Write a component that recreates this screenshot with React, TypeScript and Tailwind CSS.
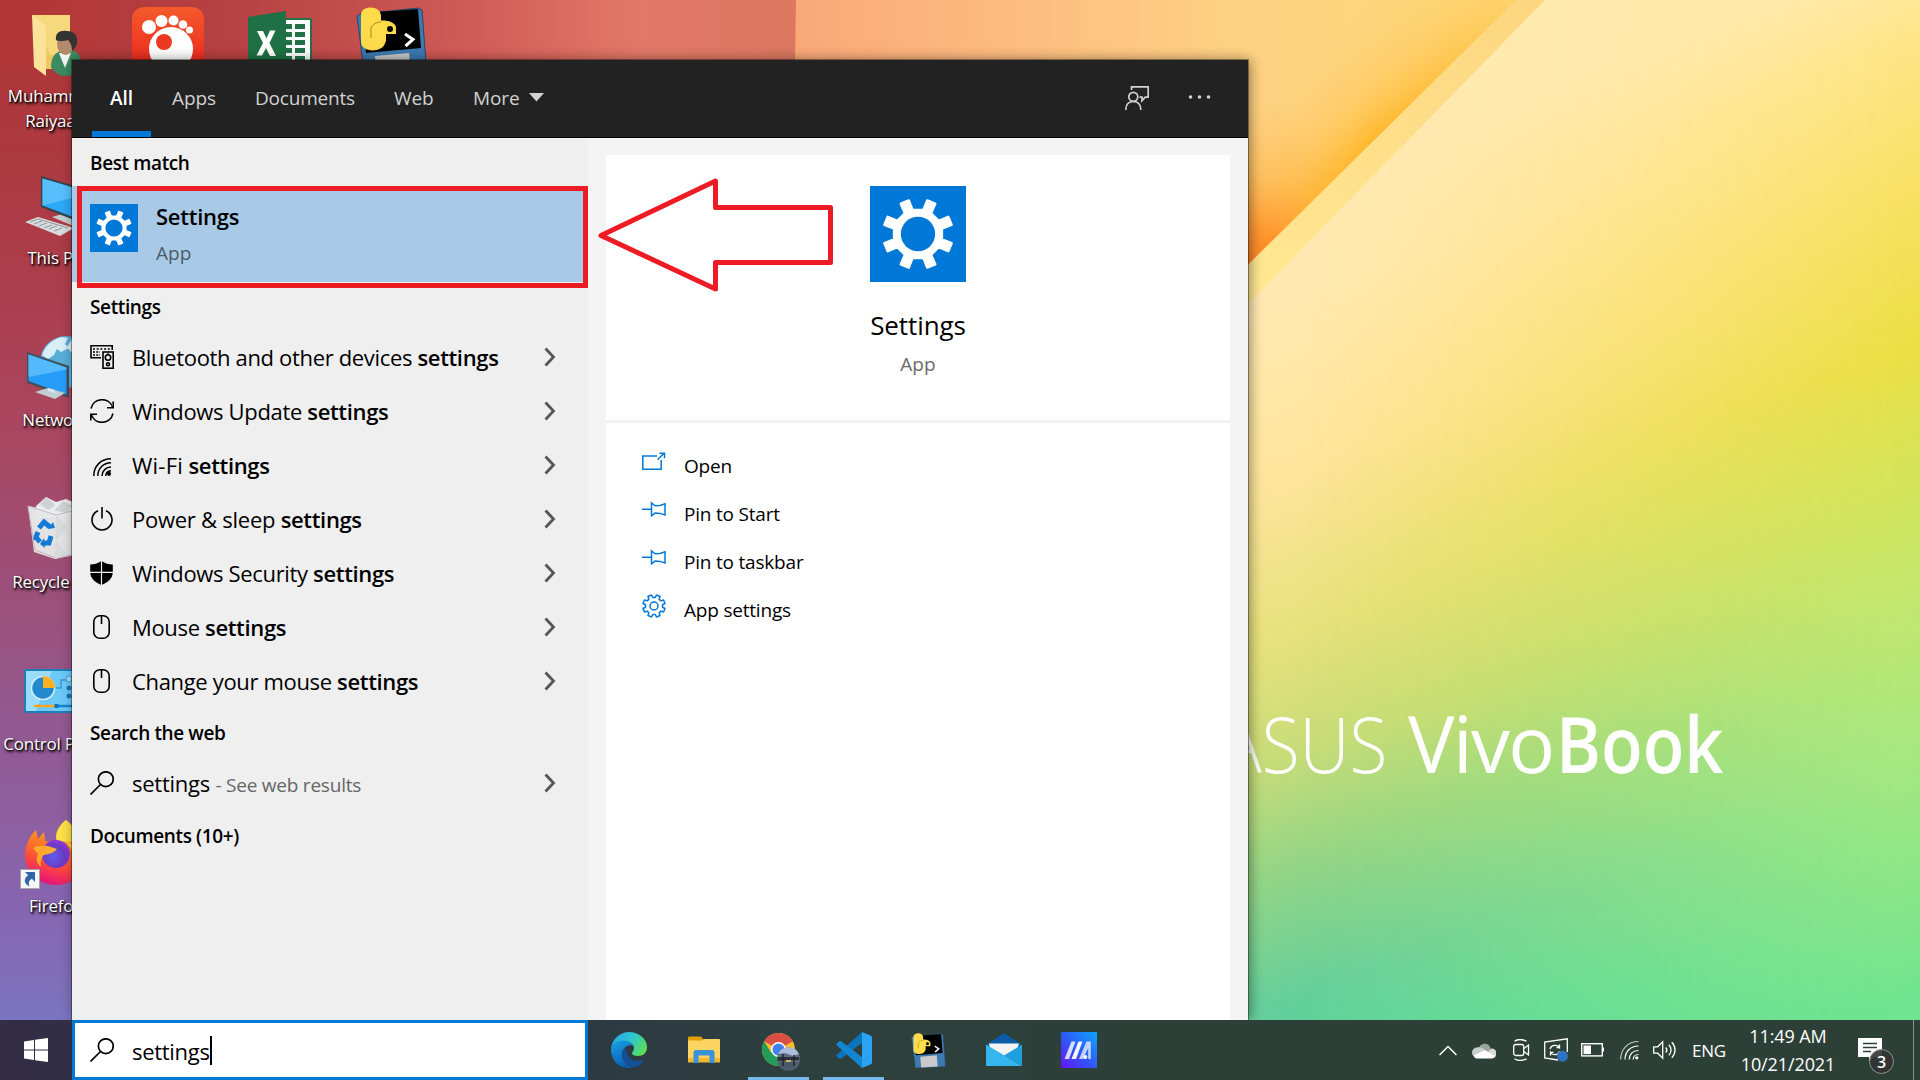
import type { ReactNode } from 'react';

/* ---------- helpers ---------- */

function gearPath(cx: number, cy: number, outer: number, inner: number, topHalf: number, rootHalf: number) {
  const pts: string[] = [];
  for (let i = 0; i < 8; i++) {
    const mid = ((i + 0.5) * Math.PI) / 4;
    const corners: [number, number][] = [
      [inner, mid - rootHalf],
      [outer, mid - topHalf],
      [outer, mid + topHalf],
      [inner, mid + rootHalf],
    ];
    corners.forEach(([r, a]) => pts.push(`${(cx + r * Math.sin(a)).toFixed(2)} ${(cy - r * Math.cos(a)).toFixed(2)}`));
  }
  return `M${pts.join('L')}Z`;
}

/* ---------- wallpaper ---------- */

function Wallpaper() {
  return (
    <svg className="absolute inset-0" width="1920" height="1080" viewBox="0 0 1920 1080">
      <defs>
        <linearGradient id="wSide" x1="0" y1="0" x2="0" y2="1">
          <stop offset="0" stopColor="#b03536" />
          <stop offset=".23" stopColor="#ac3c47" />
          <stop offset=".39" stopColor="#a9465f" />
          <stop offset=".58" stopColor="#99527f" />
          <stop offset=".84" stopColor="#8765b0" />
          <stop offset=".95" stopColor="#7a75bf" />
        </linearGradient>
        <linearGradient id="wTop" x1="0" y1="0" x2="1" y2="0">
          <stop offset="0" stopColor="#b03536" />
          <stop offset=".3" stopColor="#b84143" />
          <stop offset=".58" stopColor="#d05a56" />
          <stop offset=".8" stopColor="#e27867" />
          <stop offset="1" stopColor="#dc7860" />
        </linearGradient>
        <linearGradient id="wOrange" gradientUnits="userSpaceOnUse" x1="796" y1="0" x2="1500" y2="0">
          <stop offset="0" stopColor="#faa878" />
          <stop offset=".35" stopColor="#fdbf80" />
          <stop offset=".62" stopColor="#fed184" />
          <stop offset="1" stopColor="#fed775" />
        </linearGradient>
        <linearGradient id="wFold" gradientUnits="userSpaceOnUse" x1="1382" y1="132" x2="1312" y2="62">
          <stop offset="0" stopColor="#ffb82c" />
          <stop offset=".4" stopColor="#ffc54e" stopOpacity=".5" />
          <stop offset="1" stopColor="#ffcf70" stopOpacity="0" />
        </linearGradient>
        <linearGradient id="wFoldFade" gradientUnits="userSpaceOnUse" x1="1516" y1="0" x2="1380" y2="134">
          <stop offset="0" stopColor="#fff" stopOpacity=".15" />
          <stop offset="1" stopColor="#fff" />
        </linearGradient>
        <mask id="wFoldMask" maskUnits="userSpaceOnUse" x="796" y="0" width="1124" height="400">
          <rect x="796" width="1124" height="400" fill="url(#wFoldFade)" />
        </mask>
        <radialGradient id="wGlow" gradientUnits="userSpaceOnUse" cx="1240" cy="285" r="190">
          <stop offset="0" stopColor="#ff701e" />
          <stop offset=".3" stopColor="#ff8f2c" stopOpacity=".85" />
          <stop offset=".6" stopColor="#ffae48" stopOpacity=".4" />
          <stop offset="1" stopColor="#ffc060" stopOpacity="0" />
        </radialGradient>
        <linearGradient id="wBand" gradientUnits="userSpaceOnUse" x1="1530" y1="0" x2="1250" y2="280">
          <stop offset="0" stopColor="#fdd681" />
          <stop offset="1" stopColor="#ffe792" />
        </linearGradient>
        <linearGradient id="wWarm" gradientUnits="userSpaceOnUse" x1="0" y1="0" x2="544" y2="1504">
          <stop offset=".33" stopColor="#ffe9b2" />
          <stop offset=".45" stopColor="#ffe9b0" />
          <stop offset=".55" stopColor="#fee59c" />
          <stop offset=".648" stopColor="#e7e17c" />
          <stop offset=".72" stopColor="#c6dc79" />
          <stop offset=".785" stopColor="#93d586" />
          <stop offset=".86" stopColor="#66cf9a" />
          <stop offset=".93" stopColor="#4fd8a0" />
        </linearGradient>
        <linearGradient id="wCool" gradientUnits="userSpaceOnUse" x1="0" y1="0" x2="544" y2="1504">
          <stop offset=".38" stopColor="#ffe9a6" />
          <stop offset=".43" stopColor="#fee588" />
          <stop offset=".52" stopColor="#f8e163" />
          <stop offset=".61" stopColor="#ecdf45" />
          <stop offset=".67" stopColor="#d9e354" />
          <stop offset=".76" stopColor="#c2e76e" />
          <stop offset=".85" stopColor="#a6e880" />
          <stop offset=".995" stopColor="#70e48f" />
        </linearGradient>
        <linearGradient id="wBlend" gradientUnits="userSpaceOnUse" x1="1300" y1="0" x2="1900" y2="0">
          <stop offset="0" stopColor="#fff" stopOpacity="0" />
          <stop offset="1" stopColor="#fff" />
        </linearGradient>
        <mask id="wBlendMask" maskUnits="userSpaceOnUse" x="1200" y="0" width="720" height="1080">
          <rect x="1200" width="720" height="1080" fill="url(#wBlend)" />
        </mask>
      </defs>
      <rect width="800" height="1080" fill="url(#wSide)" />
      <rect width="796" height="66" fill="url(#wTop)" />
      <path d="M796 0H1560L1200 360H790Z" fill="url(#wOrange)" />
      <path d="M796 0H1560L1200 360H790Z" fill="url(#wFold)" mask="url(#wFoldMask)" />
      <path d="M796 0H1560L1200 360H790Z" fill="url(#wGlow)" />
      <path d="M1516 0H1920V1080H1200V312Z" fill="url(#wBand)" />
      <path d="M1545 0H1920V1080H1200V353Z" fill="url(#wWarm)" />
      <path d="M1545 0H1920V1080H1200V353Z" fill="url(#wCool)" mask="url(#wBlendMask)" />
    </svg>
  );
}

function LaptopBrand() {
  return (
    <div className="absolute left-[1220px] top-[690px] flex h-[106px] items-center whitespace-nowrap text-[78px] leading-none text-white">
      <div className="w-[188px]">
        <div className="origin-left scale-x-[0.89] font-['Open_Sans',sans-serif] font-light">ASUS</div>
      </div>
      <div className="font-['Open_Sans',sans-serif] font-medium tracking-[-1.600px]">Vivo</div>
      <div className="ml-0.5 origin-left scale-x-[0.875] font-['Open_Sans',sans-serif] font-semibold">Book</div>
    </div>
  );
}

/* ---------- desktop icons ---------- */

function ShortcutBadge() {
  return (
    <g>
      <rect x=".5" y="52.5" width="19" height="19" fill="#f6f6f6" stroke="#a5a5a5" />
      <path d="M5 55h10v10l-3.2-3.2c-3 2-3.600 4-2.300 7.500C3.500 67 3.500 61 8.200 58.200Z" fill="#3167a8" />
    </g>
  );
}

function FolderUserIcon() {
  return (
    <svg width="72" height="72" viewBox="0 0 72 72">
      <path d="M12 8h38v54H25Z" fill="#edc862" />
      <path d="M12 8h38v40H30Z" fill="#f6d97c" />
      <path d="M12 8 26 19v50L14 60Z" fill="#fbe39b" />
      <path d="M31 60c0-11 5-15 12-17h9c6 2 9 6 9 14-4 14-22 17-30 3Z" fill="#3c8a60" />
      <path d="m39 46 6 15 6-15Z" fill="#f1f5f3" />
      <ellipse cx="45.500" cy="37" rx="8.500" ry="11" fill="#b38a6d" />
      <path d="M36 33c-1-7 4-10 11-9 8 0 11 6 10 12-1 4-3 6-5 8 0-6-2-9-4-11-4 1-9 2-12 0Z" fill="#333" />
    </svg>
  );
}

function ThisPcIcon() {
  return (
    <svg width="72" height="72" viewBox="0 0 72 72">
      <path d="M32 48 46 44l24 8-12 7Z" fill="#c5cacd" />
      <path d="m21 7 51 15v36L21 38Z" fill="#33434f" />
      <path d="m22.500 9.500 49 14.500v31L22.500 36.500Z" fill="#2ea8f8" />
      <path d="m22.500 9.500 49 14.500L22.500 36.500Z" fill="#58bffd" />
      <path d="m5 53 13-5 36 11-14 8Z" fill="#d8dcde" />
      <path d="m10 53 8-3 30 9M14 55l8-3m-3 5 8-3m-3 5 8-3m-3 4 8-3m-3 5 8-3" stroke="#8d959a" strokeWidth="1" fill="none" />
    </svg>
  );
}

function NetworkIcon() {
  return (
    <svg width="72" height="72" viewBox="0 0 72 72">
      <circle cx="46" cy="31" r="26" fill="#59aed8" />
      <path d="M22 24c3-9 10-16 20-18l6 1-3 6 4 4-8 4-4-3-3 6-6 4Zm30-16 12 8 2 8-9-5-6 2-4-5Z" fill="#d9eff7" />
      <path d="m7 21 42 14v32L7 52Z" fill="#42505b" />
      <path d="m8.500 23.500 38 13v27l-38-13.500Z" fill="#279dfa" />
      <path d="m8.500 23.500 38 13v2L8.500 46Z" fill="#54bafe" />
      <path d="m15 61 13-4 17 5-10 6Z" fill="#c0cdd4" />
      <path d="m28 57 7 2v3l-7-2Z" fill="#dfe6e9" />
    </svg>
  );
}

function RecycleBinIcon() {
  return (
    <svg width="72" height="72" viewBox="0 0 72 72">
      <path d="m16 13 10-9 10 5 10-3 9 4 10 3-6 12H16Z" fill="#e9ebec" />
      <path d="m20 11 7-7 8 8-7 6Zm14 7 9-10 9 5-7 9Z" fill="#cdd2d4" />
      <path d="m8 13 52 9-5 40-20 4-21-7Z" fill="#eceeef" fillOpacity=".88" />
      <path d="m8 13 28 9 24-6-4 45-20 4-21-8Z" fill="#e2e5e6" fillOpacity=".7" stroke="#c5b8bc" strokeWidth="1" />
      <path d="m36 22 11 12-11 14 10 13-11 5Z" fill="#d6dadb" />
      <g fill="none" stroke="#157ad5" strokeWidth="5">
        <path d="m19 35 5-6 6 5" />
        <path d="m31 43-2 7h-6" />
        <path d="m20 49-4-5 2-5" />
      </g>
      <path d="m28 36 7-1-2-6Zm-4 9-4 6 5 4Zm-8-4-3 6h7Z" fill="#157ad5" />
    </svg>
  );
}

function ControlPanelIcon() {
  return (
    <svg width="72" height="72" viewBox="0 0 72 72">
      <rect x="5" y="15" width="62" height="42" rx="1" fill="#6dc9f8" stroke="#1e7eb6" strokeWidth="2" />
      <path d="M6 16h26L16 56H6Z" fill="#9bdcfc" />
      <circle cx="23" cy="33" r="11.500" fill="#2389cf" stroke="#d3eefb" strokeWidth="1.500" />
      <path d="M23 33V21a12 12 0 0 1 12 12Z" fill="#fbb024" />
      <path d="M36 33h5v-8h8" fill="none" stroke="#3a9ad5" strokeWidth="1.500" />
      <circle cx="49" cy="24" r="3" fill="#a7e0fb" stroke="#3a9ad5" />
      <circle cx="49" cy="33" r="2.500" fill="#1976b8" />
      <circle cx="49" cy="41" r="2.500" fill="#1976b8" />
      <path d="M14 51h22" stroke="#f7a51c" strokeWidth="2.500" />
      <path d="M36 51h24" stroke="#1785cf" strokeWidth="2.500" />
      <rect x="34.500" y="49" width="4" height="4" fill="#0f74c0" />
    </svg>
  );
}

function FirefoxIcon() {
  return (
    <svg width="72" height="72" viewBox="0 0 72 72">
      <defs>
        <linearGradient id="ffBody" x1=".7" y1="0" x2=".4" y2="1">
          <stop offset="0" stopColor="#ffcf3a" />
          <stop offset=".35" stopColor="#ff8a1f" />
          <stop offset=".7" stopColor="#ff4a3c" />
          <stop offset="1" stopColor="#e5117b" />
        </linearGradient>
        <radialGradient id="ffGlobe" cx=".4" cy=".6" r=".7">
          <stop offset="0" stopColor="#5f5bea" />
          <stop offset=".6" stopColor="#6b3bc4" />
          <stop offset="1" stopColor="#a838e0" />
        </radialGradient>
      </defs>
      <path d="M46 3c10 7 21 22 20 40-1 14-14 25-30 25S5 56 5 38c0-12 6-20 11-25l2 9 6-7 1 9 12 2c-3-10 2-18 9-23Z" fill="url(#ffBody)" />
      <path d="M46 3c8 8 14 17 15 29l-10-7-14-1c-3-8 3-16 9-21Z" fill="#fde04a" />
      <circle cx="36" cy="37" r="14" fill="url(#ffGlobe)" />
      <path d="M13 31c6-3 11-2 15-2l9 3c-3 4-8 5-13 6-2 1-4 7-3 12-5-4-5-9-3-13Z" fill="#ffa92e" />
      <path d="M45 24c7 2 10 6 11 12l-6-6Z" fill="#fdd23f" />
      <ShortcutBadge />
    </svg>
  );
}

function GomIcon() {
  return (
    <svg width="72" height="72" viewBox="0 0 72 72">
      <defs>
        <linearGradient id="gomBg" x1="0" y1="0" x2="0" y2="1">
          <stop offset="0" stopColor="#f45a2c" />
          <stop offset=".8" stopColor="#ec2a20" />
        </linearGradient>
      </defs>
      <rect width="72" height="72" rx="12" fill="url(#gomBg)" />
      <circle cx="39" cy="42" r="22" fill="#fff" />
      <circle cx="32" cy="35" r="8" fill="#ec3a22" />
      <circle cx="17" cy="20" r="7" fill="#fff" />
      <circle cx="29.500" cy="14" r="6" fill="#fff" />
      <circle cx="41.500" cy="13.500" r="5" fill="#fff" />
      <circle cx="51" cy="17.500" r="4.300" fill="#fff" />
      <circle cx="57.500" cy="23" r="3.500" fill="#fff" />
    </svg>
  );
}

function ExcelIcon() {
  return (
    <svg width="72" height="72" viewBox="0 0 72 72">
      <rect x="36" y="11" width="32" height="52" rx="1.500" fill="#217346" />
      <rect x="40" y="13" width="26" height="48" fill="#fff" />
      <g fill="#217346">
        {[17, 25, 33, 41, 49].map((y) => (
          <g key={y}>
            <rect x="42" y={y} width="6" height="5" />
            <rect x="51" y={y} width="10" height="5" />
          </g>
        ))}
      </g>
      <path d="M4 10 42 4v66L4 62Z" fill="#1f7145" />
      <path d="M13 24h6l3.500 7.500L26 23.500h5.500L25.500 36 32 49h-6l-4-8-4 7.500h-5.500L19 36Z" fill="#fff" />
    </svg>
  );
}

function PythonFloppyIcon({ size }: { size: number }) {
  return (
    <svg width={size} height={size} viewBox="0 0 72 72">
      <path d="m1 9 3-2 58-6 4 2 5 66-62 3Z" fill="#3d7ab0" stroke="#23486b" strokeWidth="1" />
      <path d="M6 6 62 2l3 39L10 46Z" fill="#000" />
      <path d="m49 27 8 5.500-7.500 6.500" fill="none" stroke="#fff" strokeWidth="3" />
      <path d="m19 49 34-3 2 23-34 2Z" fill="#c9c9c9" />
      <path d="M5 8c0-10 20-10 20 1v7c0 2-9 4-9 9v6l13-1v6c-2 10-24 10-24-1Z" fill="#fedb4a" />
      <path d="M15 31V20c0-8 22-9 25 0v7H30v7c-2 6-8 6-11 8" fill="#fedb4a" />
      <path d="M15 31V21c1-3 5-6 10-6" fill="none" stroke="#a58620" strokeWidth="1" />
      <circle cx="34" cy="22" r="3" fill="#000" />
    </svg>
  );
}

function DesktopItem({ icon, label }: { icon: ReactNode; label?: ReactNode }) {
  return (
    <div className="flex h-[162px] w-28 flex-col items-center">
      {icon}
      <div className="mr-px mt-1 whitespace-nowrap text-center text-[17px] leading-[25px] tracking-[-0.2px] text-white [text-shadow:1px_1px_2px_#000,1px_2px_3px_#000]">
        {label}
      </div>
    </div>
  );
}

function DesktopIcons() {
  return (
    <div className="absolute left-0 top-[7px] flex">
      <div className="flex flex-col">
        <DesktopItem icon={<FolderUserIcon />} label={<>Muhammad<br />Raiyaan</>} />
        <DesktopItem icon={<ThisPcIcon />} label="This PC" />
        <DesktopItem icon={<NetworkIcon />} label="Network" />
        <DesktopItem icon={<RecycleBinIcon />} label="Recycle Bin" />
        <DesktopItem icon={<ControlPanelIcon />} label="Control Panel" />
        <DesktopItem icon={<FirefoxIcon />} label="Firefox" />
      </div>
      <DesktopItem icon={<GomIcon />} />
      <DesktopItem icon={<ExcelIcon />} />
      <DesktopItem icon={<PythonFloppyIcon size={72} />} />
    </div>
  );
}

/* ---------- line icons ---------- */

function LineIcon({ children, width = 1.6, className = '' }: { children: ReactNode; width?: number; className?: string }) {
  return (
    <svg className={className} width="24" height="24" viewBox="0 0 24 24" fill="none" stroke="currentColor" strokeWidth={width}>
      {children}
    </svg>
  );
}

const DevicesIcon = () => (
  <LineIcon>
    <path d="M11 12.700H1V.800h21.200V5" />
    <path d="M3 4h18" strokeDasharray="2 1.700" />
    <path d="M3 7h7M3 10h7" strokeDasharray="2 1.200" />
    <rect x="13" y="7" width="10.200" height="16.200" />
    <circle cx="18" cy="12.500" r="2.700" />
    <circle cx="18" cy="19.300" r="1.500" />
    <path d="M17.200 9h1.600" />
  </LineIcon>
);
const UpdateIcon = () => (
  <LineIcon>
    <path d="M1 9.500C3.500-1.500 19-2.500 22.800 8.500M23.200 2.500v6.300H17" />
    <path d="M23 14.500C20.500 25.500 5 26.500 1.200 15.500M.800 21.500v-6.300H7" />
  </LineIcon>
);
const WifiIcon = () => (
  <LineIcon width={1.500}>
    <path d="M3.800 23C3.800 13 11 5.800 21 5.800M7.800 23C7.800 15.500 13.500 9.800 21 9.800M12 23c0-5 4-9 9-9" />
    <path d="M15.800 23c0-3 2.200-5 5.200-5.200" />
    <circle cx="19" cy="20.800" r="2.100" fill="currentColor" stroke="none" />
  </LineIcon>
);
const PowerIcon = () => (
  <LineIcon>
    <path d="M12 0v11.500M8 3.800a10 10 0 1 0 8 0" />
  </LineIcon>
);
const ShieldIcon = () => (
  <LineIcon>
    <path d="M11.500 0C8 2.500 4 3.500.200 3.500V11c0 6.500 5 10.500 11.300 13C17.800 21.500 22.800 17.500 22.800 11V3.500C19 3.500 15 2.500 11.500 0Z" fill="currentColor" stroke="none" />
    <path d="M11.500 0v24M0 11.300h23" stroke="#efefef" strokeWidth="1.200" />
  </LineIcon>
);
const MouseIcon = () => (
  <LineIcon>
    <rect x="3.800" y=".800" width="15.400" height="22.400" rx="6" />
    <path d="M11.500 1v8" />
  </LineIcon>
);
const SearchIcon = () => (
  <LineIcon width={1.700}>
    <circle cx="15.800" cy="8.200" r="7.400" />
    <path d="M10.500 13.500.500 23.500" />
  </LineIcon>
);
const OpenIcon = () => (
  <LineIcon width={1.500}>
    <path d="M15 6H.800v13.200h18.400V10" />
    <path d="m15.500 9.800 6-6M17.500 3.200h5v5" />
  </LineIcon>
);
const PinIcon = () => (
  <LineIcon width={1.500}>
    <path d="M0 11.300h9M9.500 4.800v13l3.500-2.700 5 .3 5 1.600V5.900l-5 1.600-5 .3Z" />
  </LineIcon>
);
const GearOutlineIcon = () => (
  <LineIcon width={1.500}>
    <path d={gearPath(12, 12, 11.300, 8.600, 0.17, 0.25)} strokeLinejoin="round" />
    <circle cx="12" cy="12" r="4" />
  </LineIcon>
);

function SettingsTile({ size }: { size: number }) {
  return (
    <svg width={size} height={size} viewBox="0 0 96 96">
      <rect width="96" height="96" fill="#0078d7" />
      <path d={gearPath(48, 48, 34.800, 24.500, 0.125, 0.17)} fill="#fff" stroke="#fff" strokeWidth="2.500" strokeLinejoin="round" />
      <circle cx="48" cy="48" r="17.200" fill="#0078d7" />
    </svg>
  );
}

/* ---------- search panel ---------- */

function Chevron() {
  return (
    <svg className="-mt-0.5 ml-auto mr-8" width="12" height="20" viewBox="0 0 12 20" fill="none" stroke="#555" strokeWidth="2.800">
      <path d="m1.500 1.500 8 8.500-8 8.500" />
    </svg>
  );
}

function SectionTitle({ children, className }: { children: ReactNode; className: string }) {
  return <h2 className={`flex shrink-0 items-center pl-[18px] text-[19px] font-semibold tracking-[-0.38px] ${className}`}>{children}</h2>;
}

function ResultRow({ icon, children }: { icon: ReactNode; children: ReactNode }) {
  return (
    <div className="flex h-[54px] shrink-0 items-center whitespace-pre pl-[18px] text-[22px] tracking-[-0.34px]">
      <div className="-mt-0.5 mr-[18px]">{icon}</div>
      <div className="-mt-0.5">{children}</div>
      <Chevron />
    </div>
  );
}

const results: { icon: ReactNode; text: string; className?: string }[] = [
  { icon: <DevicesIcon />, text: 'Bluetooth and other devices' },
  { icon: <UpdateIcon />, text: 'Windows Update' },
  { icon: <WifiIcon />, text: 'Wi-Fi', className: 'tracking-[0.25px]' },
  { icon: <PowerIcon />, text: 'Power & sleep', className: 'tracking-[-0.25px]' },
  { icon: <ShieldIcon />, text: 'Windows Security' },
  { icon: <MouseIcon />, text: 'Mouse' },
  { icon: <MouseIcon />, text: 'Change your mouse' },
];

const actions: { icon: ReactNode; text: string }[] = [
  { icon: <OpenIcon />, text: 'Open' },
  { icon: <PinIcon />, text: 'Pin to Start' },
  { icon: <PinIcon />, text: 'Pin to taskbar' },
  { icon: <GearOutlineIcon />, text: 'App settings' },
];

function PanelHeader() {
  return (
    <header className="flex h-[78px] shrink-0 items-stretch border-b border-black bg-[#222] pl-5 text-[19px] tracking-[-0.1px] text-[#d2d2d2]">
      <div className="flex w-[59px] flex-col items-center border-b-[6px] border-[#0078d7] pt-6 font-semibold leading-[28px] text-white">All</div>
      <nav className="flex pt-6 leading-[28px]">
        <span className="ml-[21px] w-[83px]">Apps</span>
        <span className="w-[139px] tracking-[-0.2px]">Documents</span>
        <span className="w-[79px]">Web</span>
        <span>More</span>
        <svg className="ml-[9px] mt-[9px]" width="16" height="9" viewBox="0 0 16 9">
          <path d="M0 0h15L7.500 8.500Z" fill="#d2d2d2" />
        </svg>
      </nav>
      <div className="ml-auto mr-[37px] flex items-center gap-[39px]">
        <LineIcon className="-mt-0.5" width={1.700}>
          <path d="M6.500 4V.900h16.700v10.300h-3l-3.200 3.600v-3.600h-2.500" />
          <circle cx="8.300" cy="10.800" r="4.500" />
          <path d="M.800 24c0-5.500 3-8.500 7.500-8.500s7.500 3 7.500 8.500" />
        </LineIcon>
        <svg className="-mt-1" width="23" height="6" viewBox="0 0 23 6" fill="#d2d2d2">
          <circle cx="2.500" cy="3" r="1.800" />
          <circle cx="11.500" cy="3" r="1.800" />
          <circle cx="20.500" cy="3" r="1.800" />
        </svg>
      </div>
    </header>
  );
}

function SearchPanel() {
  return (
    <section className="absolute left-[72px] top-[60px] flex h-[960px] w-[1176px] flex-col bg-[#f4f4f4] text-black shadow-[0_0_0_1px_rgba(0,0,0,0.35),2px_0_12px_rgba(0,0,0,0.45)]">
      <PanelHeader />
      <div className="flex min-h-0 flex-1">
        <div className="flex w-[516px] flex-col bg-[#efefef]">
          <SectionTitle className="h-12 pt-0.5">Best match</SectionTitle>
          <div className="relative flex h-24 shrink-0 bg-[#a8cae7] pl-[18px] pt-[18px]">
            <SettingsTile size={48} />
            <div className="ml-[18px] flex flex-col">
              <span className="-mt-0.5 text-[22px] font-semibold leading-[28px] tracking-[-0.25px]">Settings</span>
              <span className="mt-[10px] text-[19px] leading-[26px] text-[#4d5b67]">App</span>
            </div>
            <div className="absolute left-[5px] top-0 h-[102px] w-[511px] border-[5px] border-[#ed1c24]" />
          </div>
          <SectionTitle className="h-[49px] pt-0.5">Settings</SectionTitle>
          {results.map((r) => (
            <ResultRow key={r.text} icon={r.icon}>
              <span className={r.className}>{r.text}</span> <span className="font-semibold">settings</span>
            </ResultRow>
          ))}
          <SectionTitle className="h-12">Search the web</SectionTitle>
          <ResultRow icon={<SearchIcon />}>
            <span className="tracking-[-0.25px]">settings</span> <span className="text-[19px] tracking-[-0.22px] text-[#666]">- See web results</span>
          </ResultRow>
          <SectionTitle className="h-[50px] tracking-[-0.28px]">Documents (10+)</SectionTitle>
        </div>
        <div className="flex flex-1 flex-col px-[18px] pt-[17px]">
          <div className="flex h-[265px] shrink-0 flex-col items-center bg-white pt-[31px]">
            <SettingsTile size={96} />
            <h1 className="mt-[25px] text-[26px] leading-[36px] tracking-[-0.1px]">Settings</h1>
            <p className="mt-2 text-[19px] leading-[26px] text-[#6a6a6a]">App</p>
          </div>
          <div className="h-[3px] shrink-0 bg-[#f2f2f2]" />
          <div className="flex flex-1 flex-col bg-white pl-9 pt-[19px]">
            {actions.map((a) => (
              <div key={a.text} className="flex h-12 items-center gap-[18px] text-[19px] tracking-[-0.2px]">
                <div className="-mt-2 text-[#0078d7]">{a.icon}</div>
                {a.text}
              </div>
            ))}
          </div>
        </div>
      </div>
      <svg className="absolute left-[524px] top-[112px]" width="242" height="124" viewBox="596 172 242 124" fill="none" stroke="#ed1c24" strokeWidth="5" strokeLinejoin="round">
        <path d="M601 235.500 715.500 181v26.500h115v55h-115V289Z" />
      </svg>
    </section>
  );
}

/* ---------- taskbar ---------- */

const EdgeIcon = () => (
  <svg width="36" height="36" viewBox="0 0 36 36">
    <defs>
      <linearGradient id="edgeTop" x1="0" y1=".3" x2="1" y2=".7">
        <stop offset="0" stopColor="#2aa8e8" />
        <stop offset=".5" stopColor="#2fc6cf" />
        <stop offset="1" stopColor="#5ee04a" />
      </linearGradient>
      <linearGradient id="edgeBlue" x1="0" y1="0" x2=".3" y2="1">
        <stop offset="0" stopColor="#1ba0e2" />
        <stop offset="1" stopColor="#0a62b8" />
      </linearGradient>
    </defs>
    <path d="M0 17C1 7 9 0 18 0c10 0 18 7 18 15 0 6-4 9-9 9-4 0-6-1-6-3 0-1 2-2 2-5 0-4-5-7-10-7C7 9 2 12 0 17Z" fill="url(#edgeTop)" />
    <path d="M0 18C0 12 6 8.500 12 8.500c6 0 10 3 11 6-2-2-5-2-8 0-4 3-5 8-3 13 2 4 5 7 9 8.200C9 37.500 0 29 0 18Z" fill="url(#edgeBlue)" />
    <path d="M15 15c-5 4-5 9-2 14s9 8 14 5c3-1 5-4 6.500-6.500-5 2.500-12 1.500-15.500-2.500-3-3-3.500-7-3-10Z" fill="#154f98" />
  </svg>
);

const ExplorerIcon = () => (
  <svg width="34" height="28" viewBox="0 0 34 28">
    <path d="M1 2c0-1 .5-1.500 1.500-1.500H14l2.500 3V6H1Z" fill="#e0a000" />
    <path d="M1 4.500h14L17 3h15c.600 0 1 .4 1 1v22H1Z" fill="#fdd462" />
    <path d="M1 22h32v4.500H1Z" fill="#f3b62f" />
    <path d="M6.500 27V16.500c0-1.500 1-2.500 2.500-2.500h16c1.500 0 2.500 1 2.500 2.500V27h-5v-7.500h-11V27Z" fill="#3a92dd" />
  </svg>
);

const ChromeIcon = () => (
  <svg width="40" height="40" viewBox="0 0 40 40">
    <circle cx="17.500" cy="17.500" r="16.500" fill="#fbbc2c" />
    <path d="M17.500 17.500 3.200 9.300A16.500 16.500 0 0 1 31.800 9.300Z" fill="#d94f43" />
    <path d="M3.200 9.300A16.500 16.500 0 0 0 17.500 34l7-12.500-14.500-1Z" fill="#229c58" />
    <circle cx="17.500" cy="17.500" r="7.500" fill="#fff" />
    <circle cx="17.500" cy="17.500" r="6" fill="#3f7fee" />
    <circle cx="27.500" cy="27" r="11.500" fill="#5f6f80" />
    <path d="M17 22a11.500 11.500 0 0 1 21 0l-6 2-8-3Z" fill="#a9bdd8" />
    <path d="M17 25h21l.5 3-22 1Z" fill="#2c3137" />
    <path d="M17 31c7-4 14 2 21-2-2 6-6 9-10 9s-9-2-11-7Z" fill="#4a5a68" />
    <path d="M22 22v12M33 23v11" stroke="#20262c" strokeWidth="1.500" />
    <path d="M25 28h5v2h-5Z" fill="#c9b46a" />
  </svg>
);

const VsCodeIcon = () => (
  <svg width="36" height="36" viewBox="0 0 36 36">
    <path d="M26 0 1 22.500c-.8.700-.8 1.500 0 2.200l2 1.900c.6.500 1.300.6 2 .1L26 11Z" fill="#0b74bd" />
    <path d="M26 36 1 13.500c-.8-.7-.8-1.500 0-2.200l2-1.900c.6-.5 1.300-.6 2-.1L26 25Z" fill="#1286d0" />
    <path d="M26 0 35 3.800c.6.300 1 .9 1 1.600v25.200c0 .7-.4 1.300-1 1.600L26 36Z" fill="#2aa3f2" />
  </svg>
);

const MailIcon = () => (
  <svg width="36" height="36" viewBox="0 0 36 36">
    <path d="M0 13 18 1l18 12v4H0Z" fill="#0b5ca8" />
    <path d="M3 11.500h30L31 18 18 25 4 18Z" fill="#f4f4f4" />
    <path d="M0 12.500 36 34H0Z" fill="#35b6ee" />
    <path d="M36 12.500 18 23.500 36 34Z" fill="#1f9fe0" />
  </svg>
);

const MyAsusIcon = () => (
  <svg width="36" height="36" viewBox="0 0 36 36">
    <defs>
      <linearGradient id="asusBg" x1="0" y1="1" x2="1" y2="0">
        <stop offset="0" stopColor="#6414f5" />
        <stop offset=".5" stopColor="#2c5df8" />
        <stop offset="1" stopColor="#10a5fd" />
      </linearGradient>
    </defs>
    <rect width="36" height="36" fill="url(#asusBg)" />
    <path d="M10.500 9.500h4L8 27H3.500Z" fill="#fff" fillOpacity=".8" />
    <path d="M17.500 9.500h4L15 27h-4.500Z" fill="#fff" fillOpacity=".95" />
    <path d="M25.500 9.500h4.300V27h-2.600V16L22 27h-4Z" fill="#fff" fillOpacity=".7" />
    <circle cx="24.200" cy="25" r="2.100" fill="#fff" />
  </svg>
);

const taskbarApps: { name: string; icon: ReactNode; running?: boolean; nudge?: string }[] = [
  { name: 'Edge', icon: <EdgeIcon /> },
  { name: 'Explorer', icon: <ExplorerIcon /> },
  { name: 'Chrome', icon: <ChromeIcon />, running: true, nudge: 'pl-[4px] pt-[7px]' },
  { name: 'VS Code', icon: <VsCodeIcon />, running: true },
  { name: 'IDLE', icon: <PythonFloppyIcon size={35} /> },
  { name: 'Mail', icon: <MailIcon /> },
  { name: 'MyASUS', icon: <MyAsusIcon /> },
];

function SystemTray() {
  return (
    <div className="ml-auto flex items-center text-[18px] text-white">
      <svg width="18" height="11" viewBox="0 0 18 11" fill="none" stroke="#fff" strokeWidth="1.500">
        <path d="m.500 10 8.500-8.500 8.500 8.500" />
      </svg>
      <svg className="ml-[15px]" width="24" height="17" viewBox="0 0 24 17">
        <path d="M7 6a6 6 0 0 1 11-1l1 5H7Z" fill="#9aa5a0" />
        <path d="M5 15.500a5 5 0 0 1 0-10c3-.5 6 0 8 3l-5 7Z" fill="#c9cfcc" />
        <path d="M19 6.500a5 5 0 0 1 1 10l-6-4Z" fill="#d5dad7" />
        <path d="M1.500 13.500 13 8l10 6a4 4 0 0 1-3.500 2.500H5a4 4 0 0 1-3.500-3Z" fill="#fff" />
      </svg>
      <svg className="ml-[17px]" width="17" height="22" viewBox="0 0 17 22" fill="none" stroke="#fff" strokeWidth="1.300">
        <rect x=".700" y="5.500" width="10" height="11" rx="2" />
        <path d="M11 9.500 15.500 6v10L11 12.500M1.500 2.200c3-2 8-2 12 0M1.500 19.800c3 2 8 2 12 0" />
      </svg>
      <svg className="ml-[14px]" width="25" height="24" viewBox="0 0 25 24" fill="none" stroke="#fff" strokeWidth="1.300">
        <path d="M14 22 .700 20V4L23.300.800V14" />
        <path d="M6 11c1-4 7-5 9.500-1.500V6.500m0 3.200h-3M15.500 13.500c-1 4-7 4-9 1v3m0-3.200h3" />
        <circle cx="18.500" cy="18.200" r="5.500" fill="#2e74bf" stroke="none" />
      </svg>
      <svg className="ml-3" width="23" height="14" viewBox="0 0 23 14">
        <rect x=".700" y=".700" width="20.600" height="12.200" fill="none" stroke="#fff" strokeWidth="1.400" />
        <rect x="2.500" y="2.500" width="7.500" height="8.600" fill="#fff" />
        <path d="M22.300 4.500v4" stroke="#fff" strokeWidth="1.400" />
      </svg>
      <svg className="ml-4" width="19" height="20" viewBox="0 0 19 20" fill="none" stroke="#fff" strokeWidth="1.200">
        <path d="M.700 19.500C.700 9 8 1.500 18.500 1.500" opacity=".7" />
        <path d="M5 19.500C5 11.500 10.500 6 18.500 6M9.300 19.500c0-5.500 3.700-9 9.200-9M13.200 19.500c0-3 2.300-5 5.300-5" />
        <circle cx="16.800" cy="17.800" r="1.600" fill="#fff" stroke="none" />
      </svg>
      <svg className="ml-[14px]" width="23" height="20" viewBox="0 0 23 20" fill="none" stroke="#fff" strokeWidth="1.300">
        <path d="M.700 6.800h4l5-5v16.400l-5-5h-4Z" />
        <path d="M12.800 7.500c1.300 1.500 1.300 3.500 0 5M15.800 4.800c3 3 3 7.400 0 10.400M18.800 2.200c4.300 4.500 4.300 11 0 15.600" />
      </svg>
      <span className="ml-4 w-[35px] pt-0.5 text-[17px] tracking-[-0.2px]">ENG</span>
      <div className="ml-[11px] flex w-[100px] flex-col items-center text-[18px] leading-[28px] tracking-[-0.1px]">
        <span>11:49 AM</span>
        <span>10/21/2021</span>
      </div>
      <div className="relative ml-[20px] h-6 w-6">
        <svg width="24" height="24" viewBox="0 0 24 24">
          <path d="M0 0h24v19H16l-5 5v-5H0Z" fill="#fff" />
          <path d="M5 5.500h14M5 9.500h14M5 13.500h8" stroke="#2c4038" strokeWidth="1.300" />
        </svg>
        <div className="absolute left-[11px] top-[11px] flex h-[25px] w-[25px] items-center justify-center rounded-full border border-[#8d9290] bg-[#333]/90 text-[16px] font-semibold leading-none">
          3
        </div>
      </div>
      <div className="ml-[31px] mr-[6px] h-[60px] w-px bg-[#87928c]" />
    </div>
  );
}

function Taskbar() {
  return (
    <footer className="absolute inset-x-0 bottom-0 flex h-[60px] bg-[linear-gradient(90deg,#332d46_0%,#2f3242_12%,#2c3a42_31%,#2e403e_42%,#2c4038_60%,#2c4037_100%)]">
      <div className="flex w-[72px] items-center justify-center">
        <svg width="24" height="24" viewBox="0 0 24 24" fill="#fff">
          <path d="M0 3.500 10 2v9.500H0Zm11-1.700L24 0v11.500H11ZM0 12.500h10V22L0 20.500Zm11 0h13V24l-13-1.800Z" />
        </svg>
      </div>
      <div className="flex w-[516px] items-center border-[3px] border-[#0078d7] bg-white pl-[15px] text-[22px] tracking-[-0.3px] text-black">
        <SearchIcon />
        <span className="ml-[18px] mt-[3px]">settings</span>
        <span className="mt-px h-[29px] w-[2px] bg-black" />
      </div>
      <div className="ml-[3px] flex">
        {taskbarApps.map((app) => (
          <div key={app.name} className="flex w-[75px] flex-col items-center">
            <div className={`flex h-[57px] items-center justify-center ${app.nudge ?? 'pt-[3px]'}`}>{app.icon}</div>
            {app.running && <div className="h-[3px] w-[61px] bg-[#76b9ed]" />}
          </div>
        ))}
      </div>
      <SystemTray />
    </footer>
  );
}

export default function App() {
  return (
    <main className="relative h-[1080px] w-[1920px] overflow-hidden font-['Open_Sans','Noto_Sans',sans-serif]">
      <Wallpaper />
      <LaptopBrand />
      <DesktopIcons />
      <SearchPanel />
      <Taskbar />
    </main>
  );
}
